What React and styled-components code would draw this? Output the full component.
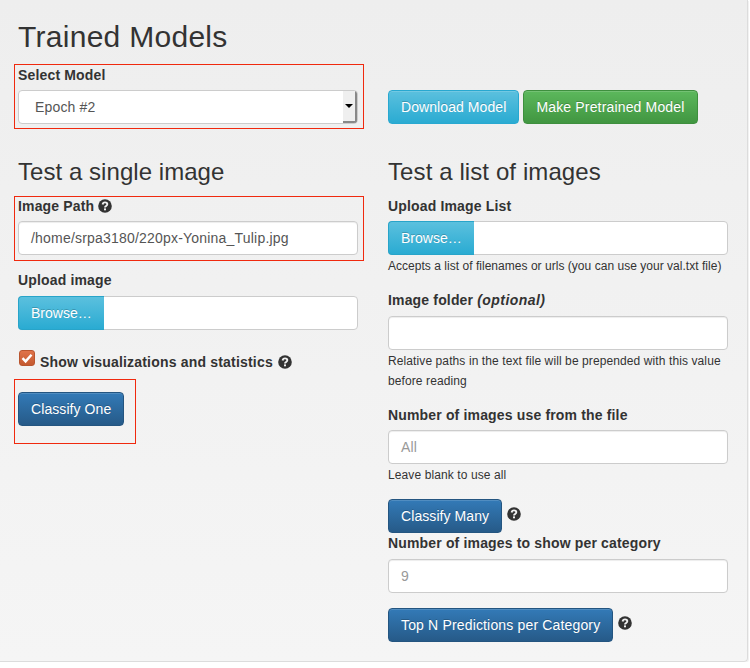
import styled, { createGlobalStyle } from 'styled-components';

const Global = createGlobalStyle`
    html, body {
        margin: 0;
        padding: 0;
        background: #fff;
    }
    body {
        font-family: "Liberation Sans", Arial, sans-serif;
        font-size: 14px;
        line-height: 20px;
        letter-spacing: 0.16px;
        color: #333;
    }
    * {
        box-sizing: border-box;
    }
`;

const Well = styled.div`
    width: 748px;
    height: 662px;
    padding: 0 19px 0 18px;
    background: linear-gradient(to bottom, #eee 0, #f5f5f5 100%);
    border-right: 1px solid #dcdcdc;
    border-bottom: 1px solid #dcdcdc;
    border-bottom-right-radius: 4px;
    box-shadow: 1px 1px 0 #f2f2f2;
`;

const Title = styled.h2`
    margin: 0;
    padding-top: 20px;
    height: 65px;
    font-size: 30px;
    line-height: 33px;
    font-weight: 500;
    letter-spacing: 0.28px;
`;

const Columns = styled.div`
    display: grid;
    grid-template-columns: 340px 340px;
    column-gap: 30px;
`;

const Column = styled.div`
    display: flex;
    flex-direction: column;
`;

const Marked = styled.div`
    position: relative;
    &::after {
        content: '';
        box-sizing: border-box;
        position: absolute;
        top: ${(p) => p.$top}px;
        left: -4px;
        width: ${(p) => p.$width}px;
        height: ${(p) => p.$height}px;
        border: 1px solid #f0290e;
        pointer-events: none;
    }
`;

const Label = styled.label`
    display: flex;
    align-items: center;
    gap: ${(p) => p.$gap || 5}px;
    margin-top: ${(p) => p.$top || 0}px;
    margin-bottom: ${(p) => p.$bottom || 5}px;
    height: 20px;
    font-weight: 700;
`;

const Optional = styled.em`
    font-style: italic;
    font-weight: 700;
    letter-spacing: 0.45px;
`;

const Heading = styled.h3`
    margin: ${(p) => p.$top}px 0 11px;
    font-size: 24px;
    line-height: 26px;
    font-weight: 500;
    letter-spacing: ${(p) => p.$spacing}px;
`;

const SelectBox = styled.div`
    display: flex;
    align-items: center;
    justify-content: space-between;
    height: 34px;
    padding-left: 16px;
    background: #fff;
    border: 1px solid #ccc;
    border-radius: 4px;
    color: #555;
    overflow: hidden;
`;

const SelectArrow = styled.span`
    display: flex;
    align-items: center;
    justify-content: center;
    width: 14px;
    height: 32px;
    background: #efefef;
    border-right: 2px solid #888;
    border-bottom: 2px solid #888;
    &::before {
        content: '';
        border-left: 4px solid transparent;
        border-right: 4px solid transparent;
        border-top: 4px solid #000;
    }
`;

const Input = styled.div`
    display: flex;
    align-items: center;
    height: 34px;
    padding: 0 12px;
    background: #fff;
    border: 1px solid #ccc;
    border-radius: 4px;
    box-shadow: inset 0 1px 1px rgba(0, 0, 0, 0.075);
    color: ${(p) => (p.$placeholder ? '#999' : '#555')};
    letter-spacing: ${(p) => (p.$placeholder ? 0.16 : 0.2)}px;
`;

const FileInput = styled.div`
    display: flex;
    height: 34px;
    background: #fff;
    border: 1px solid #ccc;
    border-radius: 4px;
`;

const BrowseButton = styled.span`
    display: flex;
    align-items: center;
    margin: -1px 0 -1px -1px;
    padding: 0 12px;
    height: 34px;
    color: #fff;
    letter-spacing: 0.02px;
    background: linear-gradient(to bottom, #5bc0de 0, #2aabd2 100%);
    border: 1px solid #28a4c9;
    border-right: 0;
    border-radius: 4px 0 0 4px;
    text-shadow: 0 -1px 0 rgba(0, 0, 0, 0.2);
`;

const colors = {
    primary: ['#337ab7', '#265a88', '#245580'],
    info: ['#5bc0de', '#2aabd2', '#28a8d0'],
    success: ['#5cb85c', '#419641', '#3e8f3e'],
};

const Button = styled.button`
    display: inline-flex;
    align-items: center;
    height: 34px;
    padding: 0 12px;
    font: inherit;
    letter-spacing: ${(p) => (p.$tight ? 0.08 : 0.16)}px;
    color: #fff;
    background: linear-gradient(to bottom, ${(p) => colors[p.$kind][0]} 0, ${(p) => colors[p.$kind][1]} 100%);
    border: 1px solid ${(p) => colors[p.$kind][2]};
    border-radius: 4px;
    box-shadow: inset 0 1px 0 rgba(255, 255, 255, 0.15);
    text-shadow: 0 -1px 0 rgba(0, 0, 0, 0.2);
`;

const ButtonRow = styled.div`
    display: flex;
    align-items: flex-start;
    gap: ${(p) => p.$gap || 4}px;
    padding-top: ${(p) => p.$top || 0}px;
`;

const IconSlot = styled.span`
    display: flex;
    margin-top: 8px;
`;

const Help = styled.p`
    margin: 1px 0 0;
    font-size: 12px;
    line-height: 20px;
    letter-spacing: ${(p) => p.$spacing || 0.1}px;
`;

const Field = styled.div`
    margin-bottom: ${(p) => p.$bottom}px;
`;

const CheckRow = styled.div`
    display: flex;
    align-items: center;
    gap: 5px;
    height: 20px;
    margin: 0 0 20px 1px;
    font-weight: 700;
    letter-spacing: 0.19px;
`;

const CheckBox = styled.span`
    display: flex;
    align-items: center;
    justify-content: center;
    width: 16px;
    height: 16px;
    margin-top: -8px;
    background: linear-gradient(to bottom, #e0734a, #c4592f);
    border: 1px solid #b9552f;
    border-radius: 3px;
`;

function HelpIcon() {
    return (
        <svg width="14" height="14" viewBox="0 0 14 14">
            <circle cx="7" cy="7" r="6.8" fill="#333" />
            <path d="M4.6 5.5C4.8 4.1 5.8 3.4 7 3.4c1.4 0 2.3.8 2.3 1.9 0 1.7-2.3 1.6-2.3 3.2" fill="none" stroke="#f1f1f1" strokeWidth="1.9" />
            <rect x="6" y="9.4" width="2" height="1.9" fill="#f1f1f1" />
        </svg>
    );
}

export default function App() {
    return (
        <Well>
            <Global />
            <Title>Trained Models</Title>
            <Columns>
                <Marked $top={-1} $width={350} $height={65}>
                    <Label>Select Model</Label>
                    <SelectBox>
                        Epoch #2
                        <SelectArrow />
                    </SelectBox>
                </Marked>
                <ButtonRow $top={25}>
                    <Button $kind="info" $tight>
                        Download Model
                    </Button>
                    <Button $kind="success">Make Pretrained Model</Button>
                </ButtonRow>
            </Columns>
            <Columns>
                <Column>
                    <Heading $top={35} $spacing={0.05}>
                        Test a single image
                    </Heading>
                    <Marked $top={0} $width={350} $height={65}>
                        <Label $gap={4}>
                            Image Path <HelpIcon />
                        </Label>
                        <Input>/home/srpa3180/220px-Yonina_Tulip.jpg</Input>
                    </Marked>
                    <Field $bottom={22}>
                        <Label $top={15} $bottom={6}>
                            Upload image
                        </Label>
                        <FileInput>
                            <BrowseButton>Browse…</BrowseButton>
                        </FileInput>
                    </Field>
                    <CheckRow>
                        <CheckBox>
                            <svg width="12" height="12" viewBox="0 0 12 12">
                                <path d="M1.5 6.2 4.6 9.4 10.5 2.8" fill="none" stroke="#fff" strokeWidth="2.4" />
                            </svg>
                        </CheckBox>
                        Show visualizations and statistics
                        <HelpIcon />
                    </CheckRow>
                    <Marked $top={-13} $width={122} $height={65}>
                        <Button $kind="primary" $tight>
                            Classify One
                        </Button>
                    </Marked>
                </Column>
                <Column>
                    <Heading $top={35} $spacing={0.1}>
                        Test a list of images
                    </Heading>
                    <Field $bottom={14}>
                        <Label>Upload Image List</Label>
                        <FileInput>
                            <BrowseButton>Browse…</BrowseButton>
                        </FileInput>
                        <Help $spacing={0.03}>Accepts a list of filenames or urls (you can use your val.txt file)</Help>
                    </Field>
                    <Field $bottom={14}>
                        <Label $gap={4} $bottom={6}>
                            Image folder <Optional>(optional)</Optional>
                        </Label>
                        <Input />
                        <Help>
                            Relative paths in the text file will be prepended with this value
                            <br />
                            before reading
                        </Help>
                    </Field>
                    <Field $bottom={14}>
                        <Label>Number of images use from the file</Label>
                        <Input $placeholder>All</Input>
                        <Help>Leave blank to use all</Help>
                    </Field>
                    <ButtonRow $gap={5}>
                        <Button $kind="primary" $tight>
                            Classify Many
                        </Button>
                        <IconSlot>
                            <HelpIcon />
                        </IconSlot>
                    </ButtonRow>
                    <Field $bottom={15}>
                        <Label $bottom={6}>Number of images to show per category</Label>
                        <Input $placeholder>9</Input>
                    </Field>
                    <ButtonRow $gap={5}>
                        <Button $kind="primary">Top N Predictions per Category</Button>
                        <IconSlot>
                            <HelpIcon />
                        </IconSlot>
                    </ButtonRow>
                </Column>
            </Columns>
        </Well>
    );
}
